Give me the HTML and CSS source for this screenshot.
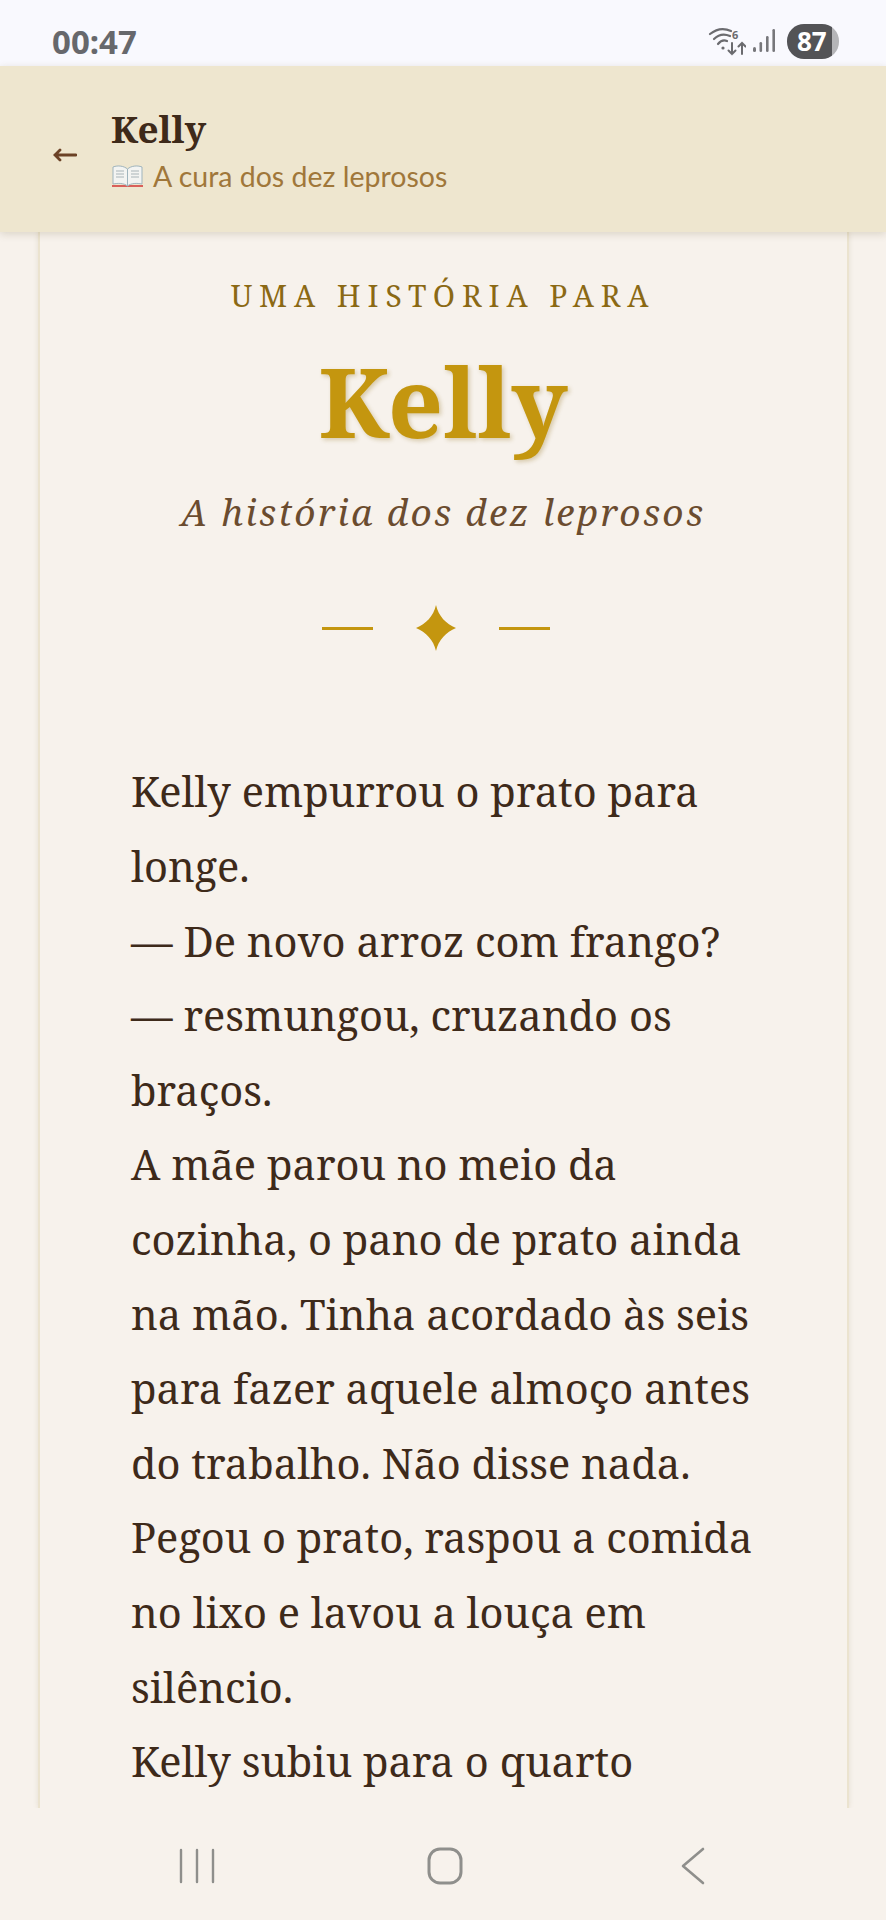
FILE: index.html
```html
<!DOCTYPE html>
<html lang="pt-BR">
<head>
  <meta charset="UTF-8" />
  <title>Kelly</title>
  <link rel="stylesheet" href="styles.css">
</head>
<body>
  <div class="phone">
    <div class="status-bar">
      <span class="clock">00:47</span>
      <div class="status-icons">
        <svg class="wifi" width="38" height="30" viewBox="0 0 38 30" fill="none" stroke="#6b6b6f" stroke-linecap="round">
          <path d="M2 8 Q12 0 23 5" stroke-width="2.2"/>
          <path d="M6 13 Q13 6 22 10" stroke-width="2.2"/>
          <path d="M10 18 Q14 13 19 15" stroke-width="2.2"/>
          <circle cx="15" cy="22" r="1.600" fill="#6b6b6f" stroke="none"/>
          <path d="M24 17 V28 M20.500 24.500 L24 28 L27.500 24.500" stroke-width="2"/>
          <path d="M34 28 V17 M30.500 20.500 L34 17 L37.500 20.500" stroke-width="2"/>
          <text x="24" y="13" class="wifi-six">6</text>
        </svg>
        <svg class="signal" width="22" height="24" viewBox="0 0 22 24" fill="#77777b">
          <rect x="0" y="18" width="3" height="5" rx="1.500"/>
          <rect x="6.500" y="13" width="2.600" height="10" rx="1.300"/>
          <rect x="13" y="7" width="2.600" height="16" rx="1.300"/>
          <rect x="19.400" y="0" width="2.600" height="23" rx="1.300"/>
        </svg>
        <div class="battery"><span class="battery-num">87</span></div>
      </div>
    </div>

    <header class="app-bar">
      <svg class="back-arrow" width="24" height="14" viewBox="0 0 24 14" fill="none" stroke="#6b4226" stroke-width="2.800" stroke-linecap="round">
        <path d="M2 7 H23 M7 2 L2 7 L7 12"/>
      </svg>
      <div class="app-title">
        <h1>Kelly</h1>
        <p>
          <svg class="book" width="33" height="24" viewBox="0 0 33 24">
            <path d="M1 21 H32 V23 H1 Z" fill="#d9605a"/>
            <path d="M2 3 C7 1 13 2 16.500 5 V22 C13 19 7 19 2 20 Z" fill="#f3f4f2" stroke="#9fb4bd"/>
            <path d="M31 3 C26 1 20 2 16.500 5 V22 C20 19 26 19 31 20 Z" fill="#f3f4f2" stroke="#9fb4bd"/>
            <path d="M5 7 H13 M5 10 H13 M5 13 H13 M20 7 H28 M20 10 H28 M20 13 H28" stroke="#a9b4b8"/>
          </svg>
          A cura dos dez leprosos
        </p>
      </div>
    </header>

    <main class="page">
      <article class="card">
        <div class="intro">
          <div class="kicker">UMA HISTÓRIA PARA</div>
          <h2 class="name">Kelly</h2>
          <div class="subtitle">A história dos dez leprosos</div>
          <div class="ornament">
            <span class="dash"></span>
            <svg width="40" height="46" viewBox="0 0 40 46"><path d="M20 0 C22.500 11 30 19 40 23 C30 27 22.500 35 20 46 C17.500 35 10 27 0 23 C10 19 17.500 11 20 0 Z" fill="#c4960f"/></svg>
            <span class="dash"></span>
          </div>
        </div>
        <div class="story">
          Kelly empurrou o prato para longe.<br>
          — De novo arroz com frango?<br>
          — resmungou, cruzando os braços.<br>
          A mãe parou no meio da cozinha, o pano de prato ainda na mão. Tinha acordado às seis para fazer aquele almoço antes do trabalho. Não disse nada. Pegou o prato, raspou a comida no lixo e lavou a louça em silêncio.<br>
          Kelly subiu para o quarto
        </div>
      </article>
    </main>

    <nav class="nav-bar">
      <svg width="36" height="36" viewBox="0 0 36 36" stroke="#8f8f8c" stroke-width="2.400" stroke-linecap="round"><path d="M2 2 V34 M18 2 V34 M34 2 V34"/></svg>
      <svg class="nav-home" width="36" height="38" viewBox="0 0 36 38" fill="none" stroke="#8f8f8c" stroke-width="3"><rect x="2" y="2" width="32" height="34" rx="11"/></svg>
      <svg class="nav-back" width="24" height="38" viewBox="0 0 24 38" fill="none" stroke="#8f8f8c" stroke-width="2.600" stroke-linecap="round" stroke-linejoin="round"><path d="M22 2 L2 19 L22 36"/></svg>
    </nav>
  </div>
</body>
</html>
```

FILE: styles.css
```css
* {
  box-sizing: border-box;
}
html, body {
  margin: 0;
  padding: 0;
}
body {
  background: #f7f2ec;
  font-family: "Noto Sans", sans-serif;
}
.phone {
  width: 886px;
  height: 1920px;
  display: flex;
  flex-direction: column;
  overflow: hidden;
}

/* status bar */
.status-bar {
  height: 66px;
  flex: none;
  background: #f9f9fe;
  display: flex;
  align-items: center;
  justify-content: space-between;
  padding: 16px 47px 0 52px;
}
.clock {
  font-weight: 700;
  font-size: 33px;
  color: #67686c;
}
.status-icons {
  display: flex;
  align-items: center;
  gap: 7px;
}
.wifi-six {
  font: 700 11px "Noto Sans", sans-serif;
  fill: #6b6b6f;
  stroke: none;
}
.battery {
  width: 52px;
  height: 35px;
  border-radius: 17px;
  background: linear-gradient(90deg, #535356 87%, #b5b5b8 87%);
  display: flex;
  align-items: center;
  padding-left: 10px;
  margin-left: 5px;
}
.battery-num {
  color: #fff;
  font-weight: 700;
  font-size: 26px;
}

/* top bar */
.app-bar {
  height: 166px;
  flex: none;
  background: #eee6cf;
  display: flex;
  align-items: center;
  padding-left: 53px;
  box-shadow: 0 2px 8px rgba(90, 70, 30, 0.18);
  position: relative;
  z-index: 2;
}
.back-arrow {
  margin: 12px 34px 0 0;
}
.app-title {
  padding-bottom: 2px;
}
.app-title h1 {
  margin: 0;
  font-family: "Noto Serif", "DejaVu Serif", serif;
  font-weight: 700;
  font-size: 37px;
  color: #3e2a1a;
}
.app-title p {
  margin: 5px 0 0;
  font-family: "Lato", sans-serif;
  font-size: 28.500px;
  color: #a0773a;
  display: flex;
  align-items: center;
  gap: 9px;
}

/* card */
.page {
  flex: 1;
  overflow: hidden;
  padding: 0 37px 0 38px;
  background: #f7f2ec;
}
.card {
  height: 100%;
  border-left: 2px solid #ebe3cf;
  border-right: 2px solid #ebe3cf;
  box-shadow: 0 0 5px rgba(120, 100, 50, 0.14);
  padding: 0 92px 0 91px;
  overflow: hidden;
}
.intro {
  text-align: center;
  margin: 0 -60px;
  padding-top: 43px;
}
.kicker {
  font-family: "Noto Serif", "DejaVu Serif", serif;
  font-size: 30px;
  letter-spacing: 6.900px;
  color: #8b6914;
}
.name {
  margin: 26px 0 0;
  font-family: "Noto Serif", "DejaVu Serif", serif;
  font-weight: 700;
  font-size: 97px;
  line-height: 1.2;
  color: #c4960f;
  text-shadow: 2px 2px 4px rgba(139, 105, 20, 0.3);
}
.subtitle {
  margin-top: 28px;
  font-family: "Noto Serif", "DejaVu Serif", serif;
  font-style: italic;
  font-size: 37px;
  letter-spacing: 2.300px;
  color: #6b4c2f;
}
.ornament {
  margin-top: 68px;
  display: flex;
  align-items: center;
  justify-content: center;
  gap: 43px;
  padding-right: 14px;
}
.dash {
  width: 51px;
  height: 3px;
  background: #c4960f;
}
.story {
  margin-top: 103px;
  font-family: "Noto Serif", "DejaVu Serif", serif;
  font-size: 41.600px;
  line-height: 74.600px;
  color: #3e2a1a;
}

/* nav */
.nav-bar {
  height: 112px;
  flex: none;
  background: #f7f2ec;
  display: flex;
  align-items: center;
  padding: 4px 0 0 179px;
}
.nav-home {
  margin-left: 212px;
}
.nav-back {
  margin-left: 218px;
}
```
